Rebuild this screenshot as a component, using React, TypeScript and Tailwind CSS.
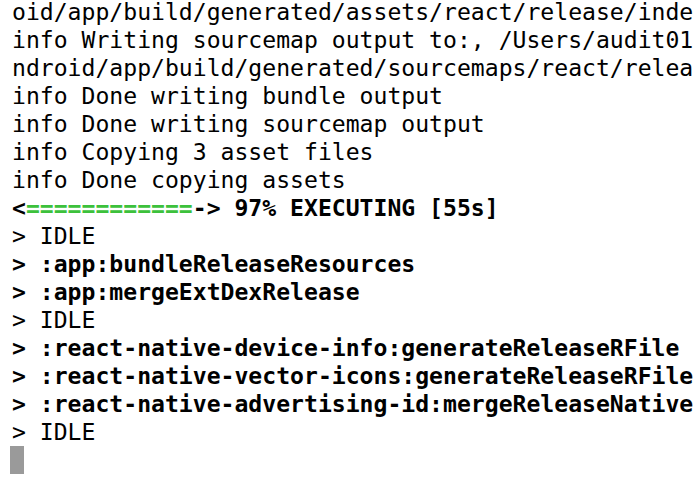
const lines: { text: string; bold?: boolean }[] = [
  { text: "oid/app/build/generated/assets/react/release/inde" },
  { text: "info Writing sourcemap output to:, /Users/audit01" },
  { text: "ndroid/app/build/generated/sourcemaps/react/relea" },
  { text: "info Done writing bundle output" },
  { text: "info Done writing sourcemap output" },
  { text: "info Copying 3 asset files" },
  { text: "info Done copying assets" },
]

const tasks: { text: string; bold?: boolean }[] = [
  { text: "> IDLE" },
  { text: "> :app:bundleReleaseResources", bold: true },
  { text: "> :app:mergeExtDexRelease", bold: true },
  { text: "> IDLE" },
  { text: "> :react-native-device-info:generateReleaseRFile", bold: true },
  { text: "> :react-native-vector-icons:generateReleaseRFile", bold: true },
  { text: "> :react-native-advertising-id:mergeReleaseNative", bold: true },
  { text: "> IDLE" },
]

function Line({ text, bold }: { text: string; bold?: boolean }) {
  return <div className={bold ? "font-bold whitespace-pre" : "whitespace-pre"}>{text}</div>
}

export default function App() {
  return (
    <div className="w-[694px] h-[482px] overflow-hidden bg-white text-black">
      <div className="-mt-[2px] pl-[12px] font-['DejaVu_Sans_Mono','Liberation_Mono',monospace] text-[23.1px] leading-[28px]">
        {lines.map((l, i) => (
          <Line key={i} {...l} />
        ))}
        <div className="font-bold whitespace-pre">
          {"<"}
          <span className="text-[#3cc13b]">{"============"}</span>
          {"-> 97% EXECUTING [55s]"}
        </div>
        {tasks.map((l, i) => (
          <Line key={i} {...l} />
        ))}
        <div className="h-[28px] flex">
          <div className="w-[14px] h-[28px] -ml-[2px] bg-[#9a9a9a]" />
        </div>
      </div>
    </div>
  )
}
